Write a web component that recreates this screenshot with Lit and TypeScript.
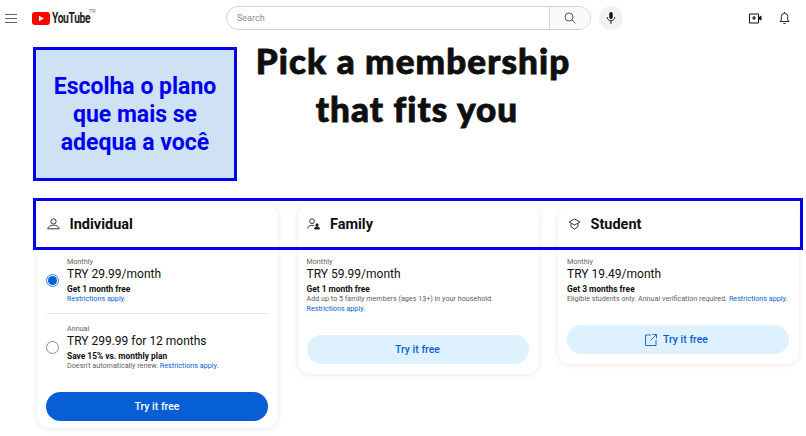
import { LitElement, html, css } from "lit";
import { customElement } from "lit/decorators.js";

const menu = html`<svg class="menu" viewBox="0 0 12 9" width="12" height="9"><path d="M0 .5h12M0 4.5h12M0 8.500h12" stroke="#606060" stroke-width="1" fill="none"/></svg>`;

@customElement("app-root")
export class AppRoot extends LitElement {
  static styles = css`
    :host { display: block; position: relative; width: 806px; height: 436px; overflow: hidden; background: #fff; font-family: Roboto, "Liberation Sans", sans-serif; color: #0f0f0f; }
    * { box-sizing: border-box; }
    header { height: 36px; display: flex; align-items: center; position: relative; padding-left: 5px; }
    .menu { flex: none; }
    .logo { display: flex; align-items: center; margin-left: 15px; position: relative; width: 79px; flex: none; }
    .logo svg { flex: none; }
    .ytword { font-weight: 700; font-size: 15.500px; letter-spacing: -0.5px; color: #212121; margin-left: 2px; display: inline-block; transform: scaleX(.66); transform-origin: left center; width: 36px; flex: none; white-space: nowrap; }
    .tr { font-size: 5.500px; color: #777; position: relative; top: -7px; flex: none; margin-left: 1px; }
    .search { margin-left: 115px; width: 365px; height: 24px; display: flex; border: 1px solid #d3d3d3; border-radius: 12px; overflow: hidden; flex: none; }
    .search .input { flex: 1; font-size: 9px; color: #8a8a8a; padding-left: 10px; display: flex; align-items: center; }
    .search .btn { width: 41px; border-left: 1px solid #d3d3d3; background: #fafafa; display: flex; align-items: center; justify-content: center; }
    .mic { margin-left: 8px; width: 24px; height: 24px; border-radius: 50%; background: #f2f2f2; display: flex; align-items: center; justify-content: center; }
    .right { margin-left: auto; display: flex; align-items: center; gap: 17px; padding-right: 16px; }
    .hero { display: flex; height: 162px; padding: 11px 0 0 33px; }
    .callout { width: 204px; height: 134px; flex: none; background: #cfe2f3; border: 3.500px solid #0000f0; display: flex; align-items: center; justify-content: center; text-align: center; color: #0000f0; font-weight: 700; font-size: 23px; line-height: 28px; padding-top: 2px; }
    h1 { flex: none; width: 352px; margin: -11px 0 0 0; text-align: center; font-family: Lato, sans-serif; font-weight: 900; font-size: 35px; line-height: 48px; letter-spacing: 1.100px; color: #0f0f0f; -webkit-text-stroke: .9px #0f0f0f; }
    h1 span { padding-left: 8px; }
    .cards { display: flex; align-items: flex-start; gap: 19.500px; padding-left: 37px; margin-top: 6px; }
    .card { width: 241px; border-radius: 13px; background: #fff; box-shadow: 0 1px 6px rgba(0,0,0,.09); padding: 0 10px 10px 9px; }
    .card.first { padding-bottom: 7px; }
    .head { height: 40px; display: flex; align-items: center; font-size: 14.500px; font-weight: 700; gap: 10px; padding-left: .5px; }
    .head svg { flex: none; }
    .body { padding-top: 13px; }
    .plan { display: flex; align-items: center; }
    .radio { flex: none; width: 13px; height: 13px; border-radius: 50%; border: 1px solid #8a8a8a; margin: 0 8px 0 0; }
    .radio.on { border-color: #2f83f0; display: flex; align-items: center; justify-content: center; }
    .radio.on::after { content: ""; width: 9px; height: 9px; border-radius: 50%; background: #065fd4; }
    .info { min-width: 0; }
    .lab { font-size: 7.200px; line-height: 10px; color: #606060; }
    .price { font-size: 12px; line-height: 17px; margin-top: -1px; color: #0f0f0f; white-space: nowrap; }
    .bold { font-size: 8.400px; font-weight: 700; line-height: 10px; margin-top: 1px; white-space: nowrap; }
    .note { font-size: 7.200px; line-height: 10px; color: #606060; white-space: nowrap; }
    .note a { color: #065fd4; text-decoration: none; }
    hr { border: 0; border-top: 1px solid #e8e8e8; margin: 9px 0 10px; }
    .cta { display: flex; align-items: center; justify-content: center; gap: 6px; height: 29px; border-radius: 15px; font-size: 10.500px; font-weight: 500; }
    .cta.solid { background: #065fd4; color: #fff; margin-top: 21px; }
    .cta.soft { background: #def1ff; color: #065fd4; margin-top: 21px; }
    .cta.ext { padding-right: 3px; }
    .band { position: absolute; left: 33px; top: 198px; width: 770px; height: 52px; border: 3.500px solid #0000f0; pointer-events: none; }
  `;

  render() {
    return html`
      <header>
        ${menu}
        <div class="logo">
          <svg width="18" height="13" viewBox="0 0 18 13"><rect width="18" height="13" rx="3.200" fill="#f00"/><path d="M7 3.700v5.600L11.800 6.500z" fill="#fff"/></svg>
          <span class="ytword">YouTube</span><span class="tr">TR</span>
        </div>
        <div class="search">
          <div class="input">Search</div>
          <div class="btn"><svg width="12" height="12" viewBox="0 0 12 12" fill="none" stroke="#444" stroke-width=".9"><circle cx="5" cy="5" r="4"/><path d="M8 8l3.400 3.400"/></svg></div>
        </div>
        <div class="mic"><svg width="10" height="14" viewBox="0 0 10 14" fill="none"><rect x="3.300" y="1" width="3.400" height="7" rx="1.700" fill="#0f0f0f"/><path d="M1.200 6c0 2.300 1.700 3.800 3.800 3.800S8.800 8.300 8.800 6M5 9.800V13" stroke="#0f0f0f" stroke-width=".9"/></svg></div>
        <div class="right">
          <svg width="13" height="11" viewBox="0 0 13 11" fill="none"><path d="M.5 1h9v9h-9z" stroke="#0f0f0f" stroke-width="1"/><path d="M5 3v4M3 5h4" stroke="#0f0f0f" stroke-width="1.200"/><path d="M10 4l2.500-1.500v5L10 6.500" fill="#0f0f0f"/></svg>
          <svg width="11" height="14" viewBox="0 0 11 14" fill="none" stroke="#0f0f0f" stroke-width=".9"><path d="M1 10.500h9L8.700 9V5.500a3.200 3.200 0 0 0-6.400 0V9z"/><path d="M4.400 12.500h2.200M5.500 2V1"/></svg>
        </div>
      </header>
      <section class="hero">
        <div class="callout">Escolha o plano<br />que mais se<br />adequa a você</div>
        <h1>Pick a membership<br /><span>that fits you</span></h1>
      </section>
      <section class="cards">
        <div class="card first">
          <div class="head">
            <svg width="13" height="12" viewBox="0 0 13 12" fill="none" stroke="#222" stroke-width=".9"><circle cx="6.500" cy="3.400" r="2.600"/><path d="M.7 10.800c.7-2.600 2.900-3.600 5.800-3.600s5.100 1 5.800 3.600z"/></svg>
            Individual
          </div>
          <div class="body">
            <div class="plan">
              <span class="radio on"></span>
              <div class="info">
                <div class="lab">Monthly</div>
                <div class="price">TRY 29.99/month</div>
                <div class="bold">Get 1 month free</div>
                <div class="note"><a>Restrictions apply.</a></div>
              </div>
            </div>
            <hr />
            <div class="plan">
              <span class="radio"></span>
              <div class="info">
                <div class="lab">Annual</div>
                <div class="price">TRY 299.99 for 12 months</div>
                <div class="bold">Save 15% vs. monthly plan</div>
                <div class="note">Doesn't automatically renew. <a>Restrictions apply.</a></div>
              </div>
            </div>
            <div class="cta solid">Try it free</div>
          </div>
        </div>
        <div class="card">
          <div class="head">
            <svg width="13" height="12" viewBox="0 0 13 12" fill="none" stroke="#222" stroke-width=".9"><circle cx="5" cy="3.200" r="2.400"/><path d="M.7 10.600c.4-2.400 2-3.300 4.300-3.300 1 0 1.700.2 2.300.5"/><circle cx="10" cy="7" r="1.200" fill="#222"/><path d="M7.400 11c.2-1.600 1.200-2.200 2.600-2.200s2.400.6 2.600 2.200z" fill="#222"/></svg>
            Family
          </div>
          <div class="body">
            <div class="lab">Monthly</div>
            <div class="price">TRY 59.99/month</div>
            <div class="bold">Get 1 month free</div>
            <div class="note">Add up to 5 family members (ages 13+) in your household.</div>
            <div class="note"><a>Restrictions apply.</a></div>
            <div class="cta soft">Try it free</div>
          </div>
        </div>
        <div class="card">
          <div class="head">
            <svg width="13" height="12" viewBox="0 0 13 12" fill="none" stroke="#222" stroke-width=".9"><path d="M6.500 1L12 4 6.500 7 1 4z"/><path d="M3 5.500v3.200L6.500 11 10 8.700V5.500"/></svg>
            Student
          </div>
          <div class="body">
            <div class="lab">Monthly</div>
            <div class="price">TRY 19.49/month</div>
            <div class="bold">Get 3 months free</div>
            <div class="note">Eligible students only. Annual verification required. <a>Restrictions apply.</a></div>
            <div class="cta soft ext">
              <svg width="12" height="12" viewBox="0 0 12 12" fill="none" stroke="#065fd4" stroke-width=".9"><path d="M6 1H.5v10.500h10.500V6"/><path d="M7.500.5h4v4M11.500.5L6 6"/></svg>
              Try it free
            </div>
          </div>
        </div>
      </section>
      <div class="band"></div>
    `;
  }
}
